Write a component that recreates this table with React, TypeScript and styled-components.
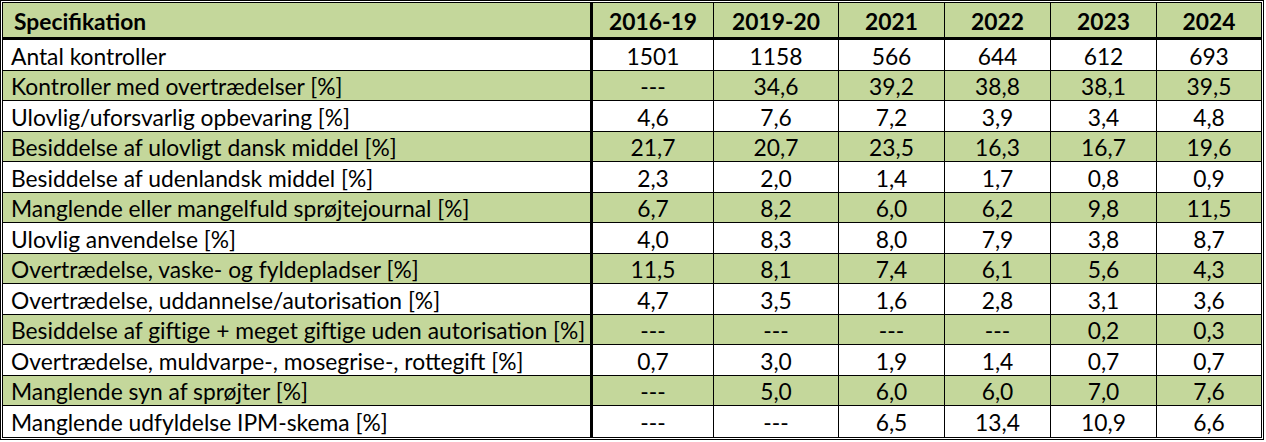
import React from "react";
import styled, { createGlobalStyle } from "styled-components";

const GlobalStyle = createGlobalStyle`
  html, body { margin: 0; padding: 0; background: #ffffff; }
  body { font-family: Lato, "Open Sans", sans-serif; color: #000; }
`;

const GREEN = "#c4d79b";

const Frame = styled.div`
  width: 1264px;
  box-sizing: border-box;
  border: 3px double #000;
`;

const Table = styled.table`
  width: 100%;
  border-collapse: separate;
  border-spacing: 0;
  table-layout: fixed;
  font-family: Lato, "Open Sans", sans-serif;
  font-size: 22.8px;
`;

const HeadRow = styled.tr`
  height: 37px;
  background: ${GREEN};
`;

const HeadCell = styled.th<{ $first?: boolean; $last?: boolean }>`
  padding: 2px ${(p) => (p.$first ? "11px" : "0")} 0;
  text-align: ${(p) => (p.$first ? "left" : "center")};
  font-weight: 700;
  border-bottom: 3px solid #000;
  border-right: ${(p) => (p.$last ? "none" : p.$first ? "3px solid #000" : "1px solid #000")};
  white-space: nowrap;
  line-height: 1;
`;

const Row = styled.tr<{ $green: boolean; $h: number }>`
  height: ${(p) => p.$h}px;
  background: ${(p) => (p.$green ? GREEN : "#fff")};
`;

const Cell = styled.td<{ $first?: boolean; $last?: boolean; $top?: boolean }>`
  padding: 2px ${(p) => (p.$first ? "8px" : "0")} 0;
  text-align: ${(p) => (p.$first ? "left" : "center")};
  border-top: ${(p) => (p.$top ? "1px solid #000" : "none")};
  border-right: ${(p) => (p.$last ? "none" : p.$first ? "3px solid #000" : "1px solid #000")};
  white-space: nowrap;
  line-height: 1;
`;

const widths = [590, 121, 125, 106, 106, 106, 104];
const headers = ["Specifikation", "2016-19", "2019-20", "2021", "2022", "2023", "2024"];

const rows: string[][] = [
  ["Antal kontroller", "1501", "1158", "566", "644", "612", "693"],
  ["Kontroller med overtrædelser [%]", "---", "34,6", "39,2", "38,8", "38,1", "39,5"],
  ["Ulovlig/uforsvarlig opbevaring [%]", "4,6", "7,6", "7,2", "3,9", "3,4", "4,8"],
  ["Besiddelse af ulovligt dansk middel [%]", "21,7", "20,7", "23,5", "16,3", "16,7", "19,6"],
  ["Besiddelse af udenlandsk middel [%]", "2,3", "2,0", "1,4", "1,7", "0,8", "0,9"],
  ["Manglende eller mangelfuld sprøjtejournal [%]", "6,7", "8,2", "6,0", "6,2", "9,8", "11,5"],
  ["Ulovlig anvendelse [%]", "4,0", "8,3", "8,0", "7,9", "3,8", "8,7"],
  ["Overtrædelse, vaske- og fyldepladser [%]", "11,5", "8,1", "7,4", "6,1", "5,6", "4,3"],
  ["Overtrædelse, uddannelse/autorisation [%]", "4,7", "3,5", "1,6", "2,8", "3,1", "3,6"],
  ["Besiddelse af giftige + meget giftige uden autorisation [%]", "---", "---", "---", "---", "0,2", "0,3"],
  ["Overtrædelse, muldvarpe-, mosegrise-, rottegift [%]", "0,7", "3,0", "1,9", "1,4", "0,7", "0,7"],
  ["Manglende syn af sprøjter [%]", "---", "5,0", "6,0", "6,0", "7,0", "7,6"],
  ["Manglende udfyldelse IPM-skema [%]", "---", "---", "6,5", "13,4", "10,9", "6,6"],
];

const rowHeight = (i: number) => {
  if (i === 0) return 30;
  if (i === rows.length - 1) return 32;
  return i % 2 === 1 ? 30 : 31;
};

export default function App() {
  return (
    <>
      <GlobalStyle />
      <Frame>
        <Table>
          <colgroup>
            {widths.map((w, i) => (
              <col key={i} style={{ width: w }} />
            ))}
          </colgroup>
          <thead>
            <HeadRow>
              {headers.map((h, i) => (
                <HeadCell key={h} $first={i === 0} $last={i === headers.length - 1}>
                  {h}
                </HeadCell>
              ))}
            </HeadRow>
          </thead>
          <tbody>
            {rows.map((r, ri) => (
              <Row key={ri} $green={ri % 2 === 1} $h={rowHeight(ri)}>
                {r.map((c, ci) => (
                  <Cell key={ci} $first={ci === 0} $last={ci === r.length - 1} $top={ri > 0}>
                    {c}
                  </Cell>
                ))}
              </Row>
            ))}
          </tbody>
        </Table>
      </Frame>
    </>
  );
}
